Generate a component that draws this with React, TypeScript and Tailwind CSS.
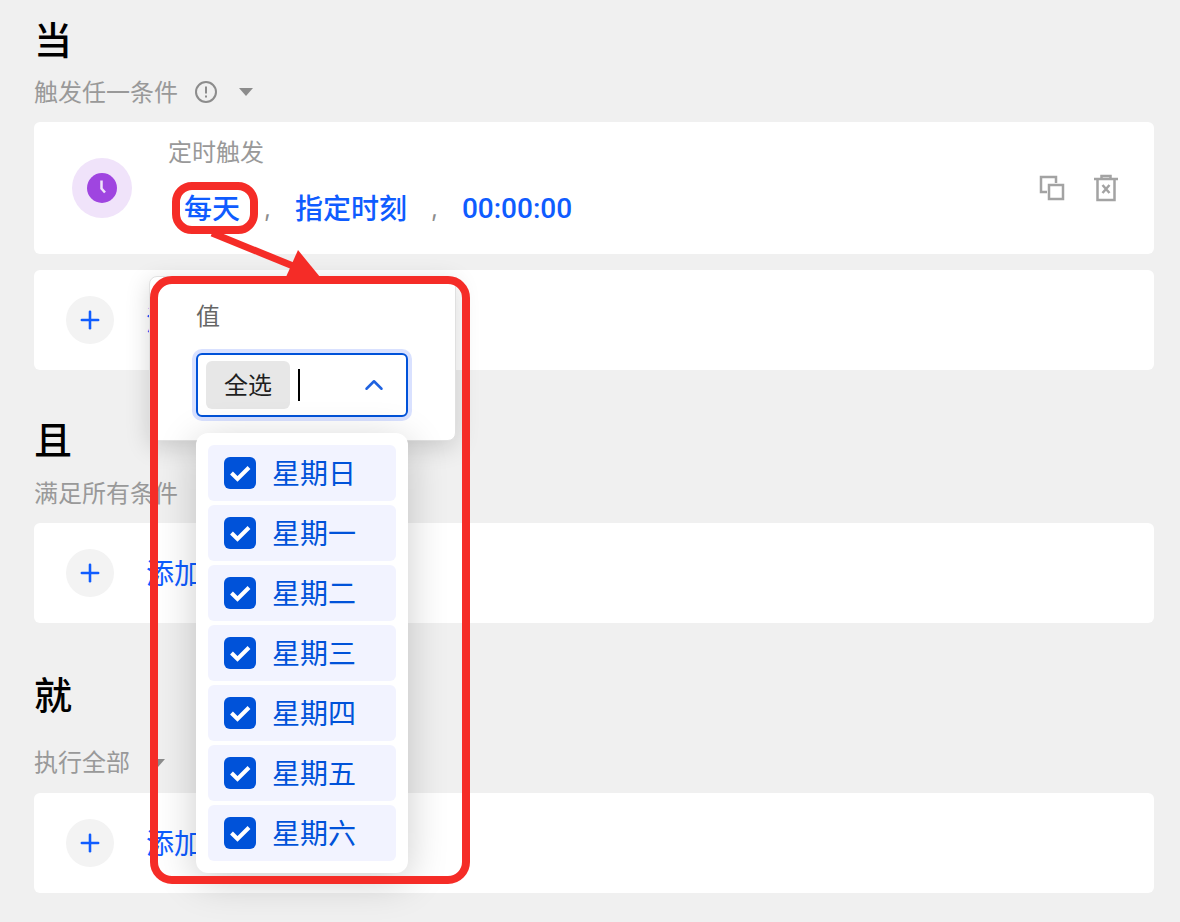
import { ChevronUp, Plus } from 'lucide-react';

const days = ['星期日', '星期一', '星期二', '星期三', '星期四', '星期五', '星期六'];

const font = "font-['Inter','Noto_Sans_CJK_SC',sans-serif]";

function Caret() {
  return (
    <svg width="16" height="10" viewBox="0 0 16 10" className="shrink-0">
      <path d="M1 1h14L8 9z" fill="#8c8c8c" />
    </svg>
  );
}

function AddRow({ label }: { label: string }) {
  return (
    <div className="flex h-[100px] items-center gap-8 rounded-md bg-white pl-8">
      <div className="flex h-12 w-12 items-center justify-center rounded-full bg-[#f3f3f3]">
        <Plus size={28} strokeWidth={2.2} className="text-[#0f5cff]" />
      </div>
      <span className="pt-[2px] text-[28px] text-[#0f5cff]">{label}</span>
    </div>
  );
}

function Heading({ children }: { children: string }) {
  return <h2 className="h-12 text-[38px] leading-[48px] font-medium text-black">{children}</h2>;
}

export default function App() {
  return (
    <div className={`relative h-[922px] w-[1180px] overflow-hidden bg-[#f0f0f0] pl-[34px] pr-[26px] pt-4 ${font}`}>
      {/* 当 */}
      <Heading>当</Heading>
      <div className="mt-[10px] flex h-9 items-center text-2xl text-[#999999]">
        <span className="pt-[2px]">触发任一条件</span>
        <svg width="24" height="24" viewBox="0 0 24 24" className="ml-4" fill="none">
          <circle cx="12" cy="12" r="10" stroke="#8c8c8c" strokeWidth="2" />
          <path d="M12 6.5v7M12 15.5v2" stroke="#8c8c8c" strokeWidth="2" />
        </svg>
        <span className="ml-[20px]"><Caret /></span>
      </div>
      <div className="mt-3 flex h-[132px] rounded-md bg-white pl-[38px] pr-[35px]">
        <div className="mt-9 flex h-[60px] w-[60px] items-center justify-center rounded-full bg-[#f0e3fa]">
          <svg width="30" height="30" viewBox="0 0 30 30">
            <circle cx="15" cy="15" r="15" fill="#9f45e0" />
            <path d="M14.5 7.5v8l3.5 4" fill="none" stroke="#f0e3fa" strokeWidth="2.5" />
          </svg>
        </div>
        <div className="ml-9 flex-1">
          <div className="mt-[13px] text-2xl leading-9 text-[#999999]">定时触发</div>
          <div className="mt-[14px] flex h-[48px] items-center text-[28px] font-medium text-[#0f5cff]">
            <span className="ml-4">每天</span>
            <span className="mx-6 text-2xl font-normal text-[#8c8c8c]">,</span>
            <span>指定时刻</span>
            <span className="mx-6 text-2xl font-normal text-[#8c8c8c]">,</span>
            <span className="font-['Roboto',sans-serif]">00:00:00</span>
          </div>
        </div>
        <div className="mt-[52px] flex h-7 items-center gap-[28px]">
          <svg width="26" height="26" viewBox="0 0 26 26" fill="none" stroke="#a3a3a3" strokeWidth="2.5">
            <path d="M8 17H2V2h15v6" />
            <rect x="10" y="10" width="14" height="14" />
          </svg>
          <svg width="26" height="28" viewBox="0 0 26 28" fill="none" stroke="#a3a3a3" strokeWidth="2.5">
            <path d="M1 5h24M8.5 5V2h9v3M4.5 5v21h17V5M9.5 11l7 8M16.5 11l-7 8" />
          </svg>
        </div>
      </div>
      <div className="mt-4">
        <AddRow label="添" />
      </div>

      {/* 且 */}
      <div className="mt-[46px]">
        <Heading>且</Heading>
      </div>
      <div className="mt-[11px] flex h-9 items-center pt-[2px] text-2xl text-[#999999]">满足所有条件</div>
      <div className="mt-3">
        <AddRow label="添加条件" />
      </div>

      {/* 就 */}
      <div className="mt-12">
        <Heading>就</Heading>
      </div>
      <div className="mt-[26px] flex h-9 items-center gap-5 text-2xl text-[#999999]">
        <span>执行全部</span>
        <Caret />
      </div>
      <div className="mt-3">
        <AddRow label="添加操作" />
      </div>

      {/* popover */}
      <div className="absolute left-[149px] top-[276px] h-[165px] w-[307px] rounded-lg border border-[#e0e0e0] bg-white shadow-[0_6px_24px_rgba(0,0,0,0.16)]">
        <div className="ml-[46px] mt-6 text-2xl leading-8 text-[#666666]">值</div>
      </div>
      <div className="absolute left-[196px] top-[353px] flex h-16 w-[212px] items-center rounded-md border-2 border-[#0052d9] bg-white pl-2 shadow-[0_0_0_4px_#d9e1ff]">
        <div className="flex h-12 w-[84px] items-center justify-center rounded-md bg-[#e7e7e7] pt-[2px] text-2xl text-[#1f1f1f]">全选</div>
        <div className="ml-2 h-8 w-0.5 bg-black" />
        <ChevronUp size={30} strokeWidth={2} className="ml-[59px] text-[#1f62e0]" />
      </div>

      {/* dropdown */}
      <div className="absolute left-[196px] top-[433px] flex w-[212px] flex-col gap-1 rounded-xl bg-white p-3 shadow-[0_8px_40px_rgba(0,0,0,0.2)]">
        {days.map((d) => (
          <div key={d} className="flex h-14 items-center gap-4 rounded-md bg-[#f2f3ff] pl-4 text-[28px] text-[#0052d9]">
            <div className="flex h-8 w-8 items-center justify-center rounded-md bg-[#0052d9]">
              <svg width="24" height="20" viewBox="0 0 24 20" fill="none">
                <path d="M3.5 10l6 6L21 4.5" stroke="#ffffff" strokeWidth="4" />
              </svg>
            </div>
            <span className="pt-[2px]">{d}</span>
          </div>
        ))}
      </div>

      {/* red annotation */}
      <div className="pointer-events-none absolute left-[150px] top-[276px] h-[608px] w-[320px] rounded-[22px] border-8 border-[#f52c27]" />
      <div className="pointer-events-none absolute left-[172px] top-[182px] h-[52px] w-[86px] rounded-[20px] border-8 border-[#f52c27]" />
      <svg className="pointer-events-none absolute left-[200px] top-[225px]" width="130" height="60" viewBox="0 0 130 60">
        <path d="M12 8l86 35" stroke="#f52c27" strokeWidth="7" />
        <path d="M98 25l22 27H86z" fill="#f52c27" />
      </svg>
    </div>
  );
}
